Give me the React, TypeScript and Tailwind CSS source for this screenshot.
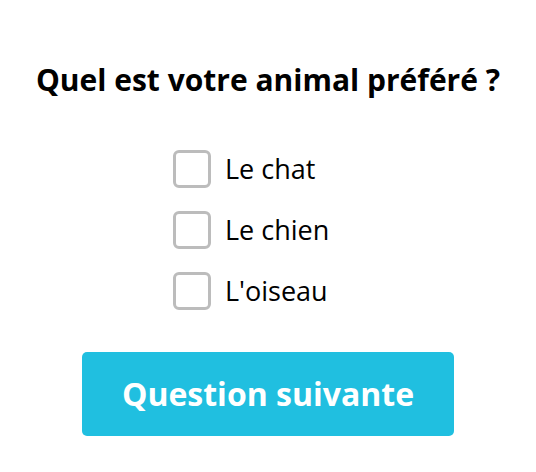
export default function App() {
  const opts = ["Le chat", "Le chien", "L'oiseau"];
  return (
    <div className="w-[536px] h-[472px] bg-white flex flex-col" style={{ fontFamily: '"Open Sans", sans-serif' }}>
      <h1 className="mt-[58px] text-center text-[30px] leading-[44px] font-bold text-black">Quel est votre animal préféré ?</h1>
      <div className="mt-[48px] ml-[173px] flex flex-col gap-[23px]">
        {opts.map((o) => (
          <label key={o} className="flex items-center gap-[14px]">
            <span className="w-[38px] h-[38px] rounded-[6px] border-[3px] border-[#bcbcbc] bg-white" />
            <span className="text-[27px] leading-[38px] text-black">{o}</span>
          </label>
        ))}
      </div>
      <button className="mt-[42px] mx-auto w-[372px] h-[84px] rounded-[5px] bg-[#20bfe0] text-white text-[32px] font-bold">
        Question suivante
      </button>
    </div>
  );
}
